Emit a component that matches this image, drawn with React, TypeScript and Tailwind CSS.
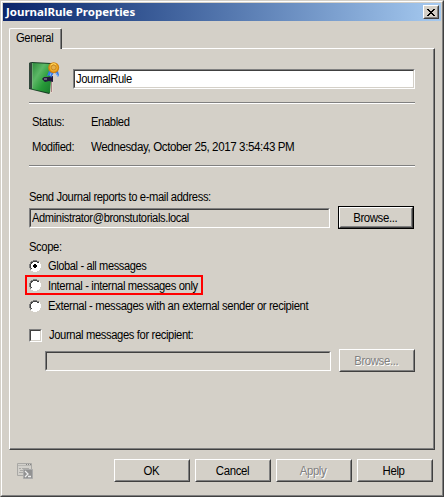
import React from "react";

type Kids = { children?: React.ReactNode };

function Label({ children, className = "origin-left scale-x-[0.935]" }: Kids & { className?: string }) {
  return (
    <span className={`block whitespace-pre text-[12px] leading-[16px] tracking-[-0.4px] ${className}`}>{children}</span>
  );
}

function Button({ children, isDefault = false, disabled = false }: Kids & { isDefault?: boolean; disabled?: boolean }) {
  return (
    <button type="button" disabled={disabled} className={`block h-[23px] w-[76px] shrink-0 ${isDefault ? "border border-black" : ""}`}>
      <span className="flex h-full w-full border border-t-white border-l-white border-r-[#404040] border-b-[#404040]">
        <span
          className={`flex h-full w-full items-center justify-center border border-t-[#d4d0c8] border-l-[#d4d0c8] border-r-[#808080] border-b-[#808080] pr-[2px] ${
            disabled ? "text-[#808080] [text-shadow:1px_1px_0_#fff]" : ""
          }`}
        >
          <Label className="scale-x-[0.95]">{children}</Label>
        </span>
      </span>
    </button>
  );
}

function Field({ children, className = "" }: Kids & { className?: string }) {
  return (
    <div className={`h-5 border border-t-[#808080] border-l-[#808080] border-r-white border-b-white ${className}`}>
      <div className="flex h-full items-center border border-t-[#404040] border-l-[#404040] border-r-[#d4d0c8] border-b-[#d4d0c8] pl-px">
        {children}
      </div>
    </div>
  );
}

function Rule() {
  return <div className="h-[2px] w-[386px] border-t border-b border-t-[#808080] border-b-white" />;
}

function Radio({ checked = false }: { checked?: boolean }) {
  return (
    <svg width="12" height="12" viewBox="0 0 12 12" className="shrink-0" shapeRendering="crispEdges">
      <path d="M4 1h4v1h2v2h1v4h-1v2H8v1H4v-1H2V8H1V4h1V2h2z" fill="#fff" />
      <path d="M4 0h4v1H4zM2 1h2v1H2zM8 1h2v1H8zM1 2h1v2H1zM0 4h1v4H0zM1 8h1v2H1z" fill="#808080" />
      <path d="M4 1h4v1H4zM2 2h2v1H2zM8 2h2v1H8zM2 3h1v1H2zM1 4h1v4H1zM2 8h1v1H2z" fill="#404040" />
      <path d="M10 2h1v2h-1zM11 4h1v4h-1zM10 8h1v2h-1zM8 10h2v1H8zM4 11h4v1H4zM2 10h2v1H2z" fill="#fff" />
      {checked && <path d="M5 4h2v1h1v2H7v1H5V7H4V5h1z" fill="#000" />}
    </svg>
  );
}

function JournalIcon() {
  return (
    <svg width="32" height="34" viewBox="0 0 32 34" className="shrink-0">
      <defs>
        <linearGradient id="cover" x1="0" y1="0" x2="1" y2="1">
          <stop offset="0" stopColor="#2c8b3b" />
          <stop offset=".35" stopColor="#5cb866" />
          <stop offset=".65" stopColor="#279a38" />
          <stop offset="1" stopColor="#18792c" />
        </linearGradient>
      </defs>
      <path d="M0 2l3-1 19 1v29l-2 2L0 28z" fill="#183f25" />
      <path d="M20 7l4 1v23l-3 2z" fill="#e4d8cf" />
      <path d="M22.500 20v11" stroke="#996b70" strokeWidth=".8" />
      <path d="M3 2l19 1v17l-1 12L3 28z" fill="url(#cover)" />
      <path d="M0 2l3-1v27l-3-1z" fill="#32483c" />
      <path d="M3.500 2v25" stroke="#92ba92" strokeWidth=".5" />
      <path d="M13 18l2-2h4l5-1v6l-4-1-4 1z" fill="#21183c" />
      <path d="M15 18h3" stroke="#aaa3b0" />
      <path d="M20 10l-2 5 3-1 1 3 3-6zM25 10l4 6 1-2-1-4z" fill="#3477e8" />
      <path d="M22 12l-1 3M27 12l2 3" stroke="#86bafa" />
      <circle cx="24.700" cy="6.700" r="5.500" fill="#d08410" />
      <circle cx="24.700" cy="6.500" r="4.200" fill="#f0aa27" />
      <circle cx="24.700" cy="6.500" r="2.400" fill="#e6b04a" stroke="#b0741a" strokeWidth=".6" />
      <path d="M21.500 4l3-1.500 2.500 1" stroke="#ffdc68" fill="none" />
    </svg>
  );
}

function ShellIcon() {
  return (
    <svg width="16" height="16" viewBox="0 0 16 16" className="shrink-0">
      <path d="M.5.5h14v12H.5z" fill="#d2d0cb" stroke="#a9a8a5" />
      <path d="M1 2.500h13" stroke="#b8b7b3" />
      <path d="M9 1.500h1M11 1.500h1M13 1.500h1" stroke="#858585" />
      <path d="M2 5.500h2M5 5.500h7M3 7.500h5M2 9.500h4" stroke="#aaa9a6" />
      <path d="M6.500 6.500h9v9h-9z" fill="#929292" stroke="#aaa" />
      <path d="M8 8l3 3-3 3M11 13.500h3" stroke="#ededed" strokeWidth="1.300" fill="none" />
    </svg>
  );
}

export default function App() {
  return (
    <div className="h-[497px] w-[444px] overflow-hidden border border-t-[#d4d0c8] border-l-[#d4d0c8] border-r-[#404040] border-b-[#404040] bg-[#d4d0c8] font-['Liberation_Sans',Arial,sans-serif] text-black">
      <div className="flex h-full flex-col border border-t-white border-l-white border-r-[#808080] border-b-[#808080] pt-px">
        <header className="ml-px flex h-[18px] w-[438px] shrink-0 items-center justify-between bg-linear-to-r from-[#0a246a] to-[#a6caf0] pr-[2px] pl-[3px]">
          <h1 className="origin-left scale-x-[1.045] whitespace-pre font-['Noto_Sans',sans-serif] text-[11px] leading-[16px] font-bold text-white">JournalRule Properties</h1>
          <button type="button" aria-label="Close" className="h-[14px] w-4 border border-t-white border-l-white border-r-[#404040] border-b-[#404040] bg-[#d4d0c8]">
            <span className="flex h-full w-full items-center justify-center border border-t-[#d4d0c8] border-l-[#d4d0c8] border-r-[#808080] border-b-[#808080]">
              <svg width="8" height="7" viewBox="0 0 8 7" shapeRendering="crispEdges">
                <path d="M0 0h2v1h1v1h2V1h1V0h2v1H7v1H6v1H5v1h1v1h1v1h1v1H6V6H5V5H3v1H2v1H0V6h1V5h1V4h1V3H2V2H1V1H0z" />
              </svg>
            </span>
          </button>
        </header>

        <div className="z-10 mt-[7px] ml-[7px] h-[21px] w-[53px] shrink-0 rounded-t-[2px] border-t border-l border-r border-t-white border-l-white border-r-[#404040] bg-[#d4d0c8]">
          <div className="h-full border-r border-r-[#808080] pt-px pl-[6px]">
            <Label>General</Label>
          </div>
        </div>

        <main className="-mt-px ml-[7px] h-[402px] w-[426px] shrink-0 border border-t-white border-l-white border-r-[#404040] border-b-[#404040]">
          <div className="flex h-full flex-col border-r border-b border-r-[#808080] border-b-[#808080] pl-[19px]">
            <div className="flex h-[53px] pt-[12px]">
              <JournalIcon />
              <div className="mt-[8px] ml-[12px]">
                <Field className="w-[342px] bg-white"><Label>JournalRule</Label></Field>
              </div>
            </div>
            <Rule />
            <dl className="flex h-[61px] flex-col gap-[9px] pt-[10px] pl-[3px]">
              <div className="flex"><dt className="w-[59px]"><Label>Status:</Label></dt><dd><Label>Enabled</Label></dd></div>
              <div className="flex"><dt className="w-[59px]"><Label>Modified:</Label></dt><dd><Label className="origin-left scale-x-[0.963]">Wednesday, October 25, 2017 3:54:43 PM</Label></dd></div>
            </dl>
            <Rule />
            <div className="pt-[22px]"><Label>Send Journal reports to e-mail address:</Label></div>
            <div className="mt-px flex items-center gap-[8px]">
              <Field className="w-[301px]"><Label className="origin-left scale-x-[0.927]">Administrator@bronstutorials.local</Label></Field>
              <Button isDefault>Browse...</Button>
            </div>
            <div className="mt-[10px]"><Label>Scope:</Label></div>
            <div className="mt-[2px] flex h-[18px] items-center gap-[7px]"><Radio checked /><Label className="origin-left scale-x-[0.92]">Global - all messages</Label></div>
            <div className="-ml-[4px] flex h-5 w-[178px] items-center gap-[7px] border-2 border-[#f00] pl-[2px]"><Radio />
              <div className="pt-[2px]"><Label>Internal - internal messages only</Label></div>
            </div>
            <div className="mt-[2px] flex h-[18px] items-center gap-[7px]"><Radio /><Label className="origin-left scale-x-[0.939]">External - messages with an external sender or recipient</Label></div>
            <div className="mt-[12px] flex h-4 items-center gap-[7px]">
              <span className="h-[13px] w-[13px] border border-t-[#808080] border-l-[#808080] border-r-white border-b-white bg-white">
                <span className="block h-full border border-t-[#404040] border-l-[#404040] border-r-[#d4d0c8] border-b-[#d4d0c8]" />
              </span>
              <Label>Journal messages for recipient:</Label>
            </div>
            <div className="mt-[6px] ml-4 flex items-center gap-[8px]">
              <Field className="w-[286px]" />
              <Button disabled>Browse...</Button>
            </div>
          </div>
        </main>

        <footer className="flex pt-[9px] pl-[15px]">
          <div className="w-[97px] pt-[4px]"><ShellIcon /></div>
          <div className="flex gap-[5px]">
            <Button>OK</Button>
            <Button>Cancel</Button>
            <Button disabled>Apply</Button>
            <Button>Help</Button>
          </div>
        </footer>
      </div>
    </div>
  );
}
